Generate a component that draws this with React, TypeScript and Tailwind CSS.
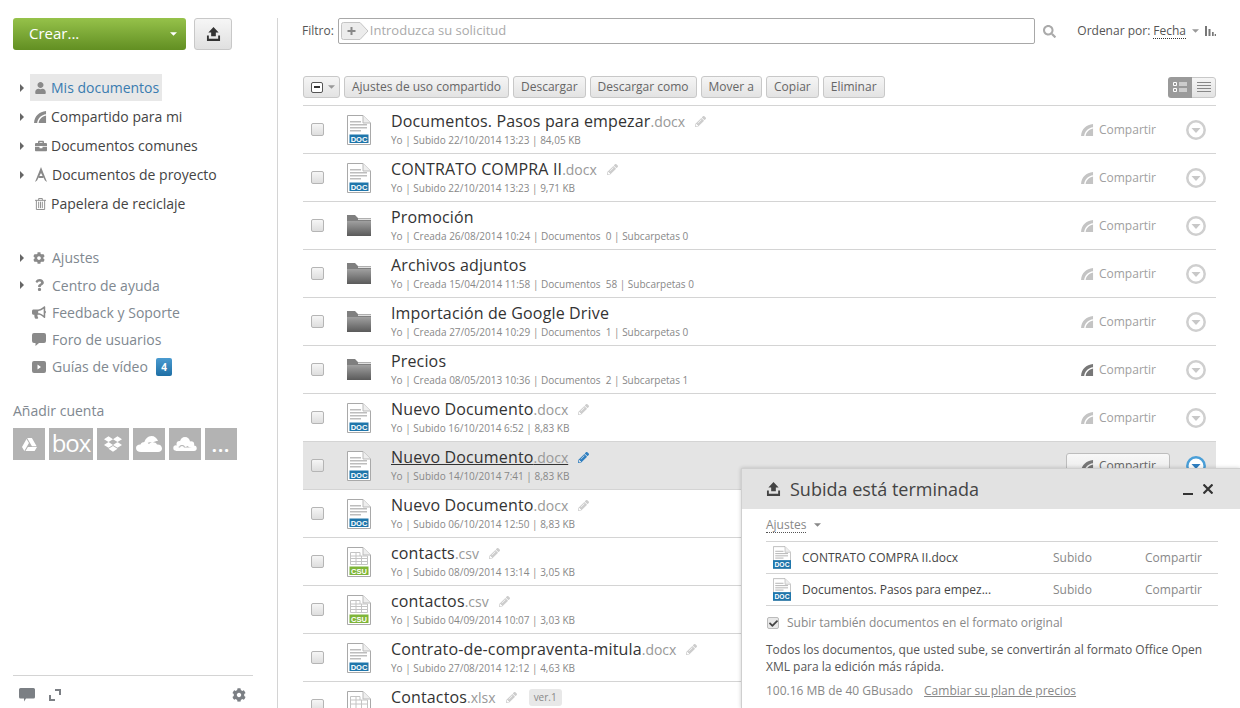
import React from 'react';
import { FaUser, FaBriefcase, FaCog, FaQuestion, FaBullhorn, FaPencilAlt, FaSearch, FaGoogleDrive, FaDropbox, FaCheck } from 'react-icons/fa';

type Kind = 'doc' | 'folder' | 'csv' | 'xlsx';

type Row = {
  name: string;
  ext?: string;
  meta: string;
  kind: Kind;
  shared?: boolean;
  hover?: boolean;
  badge?: string;
};

const rows: Row[] = [
  { name: 'Documentos. Pasos para empezar', ext: '.docx', meta: 'Yo | Subido 22/10/2014 13:23 | 84,05 KB', kind: 'doc' },
  { name: 'CONTRATO COMPRA II', ext: '.docx', meta: 'Yo | Subido 22/10/2014 13:23 | 9,71 KB', kind: 'doc' },
  { name: 'Promoción', meta: 'Yo | Creada 26/08/2014 10:24 | Documentos  0 | Subcarpetas 0', kind: 'folder' },
  { name: 'Archivos adjuntos', meta: 'Yo | Creada 15/04/2014 11:58 | Documentos  58 | Subcarpetas 0', kind: 'folder' },
  { name: 'Importación de Google Drive', meta: 'Yo | Creada 27/05/2014 10:29 | Documentos  1 | Subcarpetas 0', kind: 'folder' },
  { name: 'Precios', meta: 'Yo | Creada 08/05/2013 10:36 | Documentos  2 | Subcarpetas 1', kind: 'folder', shared: true },
  { name: 'Nuevo Documento', ext: '.docx', meta: 'Yo | Subido 16/10/2014 6:52 | 8,83 KB', kind: 'doc' },
  { name: 'Nuevo Documento', ext: '.docx', meta: 'Yo | Subido 14/10/2014 7:41 | 8,83 KB', kind: 'doc', hover: true },
  { name: 'Nuevo Documento', ext: '.docx', meta: 'Yo | Subido 06/10/2014 12:50 | 8,83 KB', kind: 'doc' },
  { name: 'contacts', ext: '.csv', meta: 'Yo | Subido 08/09/2014 13:14 | 3,05 KB', kind: 'csv' },
  { name: 'contactos', ext: '.csv', meta: 'Yo | Subido 04/09/2014 10:07 | 3,03 KB', kind: 'csv' },
  { name: 'Contrato-de-compraventa-mitula', ext: '.docx', meta: 'Yo | Subido 27/08/2014 12:12 | 4,63 KB', kind: 'doc' },
  { name: 'Contactos', ext: '.xlsx', meta: '', kind: 'xlsx', badge: 'ver.1' },
];

const UploadIcon = ({ className }: { className?: string }) => (
  <svg viewBox="0 0 16 15" className={className} fill="currentColor">
    <path d="M8 0 L13.5 6 H10.5 V10 H5.5 V6 H2.5 Z" />
    <path d="M1 9 H3 V12.5 H13 V9 H15 V15 H1 Z" />
  </svg>
);

const ShareIcon = ({ className }: { className?: string }) => (
  <svg viewBox="0 0 14 13" className={className} fill="currentColor">
    <path d="M0 13 C0.5 5.5 5.5 0.8 13 0 V3.4 C8 4 4 7.5 3.4 13 Z" />
    <path d="M5 13 C5.4 9.2 8.6 5.8 13 5 V13 Z" />
  </svg>
);

const Caret = ({ className }: { className?: string }) => (
  <svg viewBox="0 0 8 4" className={className} fill="currentColor">
    <path d="M0 0 H8 L4 4 Z" />
  </svg>
);

const Arrow = () => (
  <svg viewBox="0 0 4 8" className="w-[4px] h-[8px] text-[#666]" fill="currentColor">
    <path d="M0 0 L4 4 L0 8 Z" />
  </svg>
);

const PageIcon = ({ kind, small }: { kind: Kind; small?: boolean }) => {
  const label = kind === 'csv' ? 'CSU' : kind === 'xlsx' ? '' : 'DOC';
  const color = kind === 'csv' ? '#7fb539' : '#1f76ab';
  const grid = kind === 'csv' || kind === 'xlsx';
  return (
    <svg viewBox="0 0 24 30" className={small ? 'w-[18px] h-[23px]' : 'w-[24px] h-[30px]'}>
      <path d="M0.5 0.5 H16 L23.5 8 V29.5 H0.5 Z" fill="#fff" stroke="#a9a9a9" />
      <path d="M16 0.5 V8 H23.5" fill="#eee" stroke="#bbb" />
      {grid ? (
        <g fill="none" stroke="#c4c4c4">
          <path d={kind === 'xlsx' ? 'M3.5 5.5 H13 V9 H20.5 V26.5 H3.5 Z' : 'M3.5 5.5 H13 V9 H20.5 V17.5 H3.5 Z'} />
          <path d={kind === 'xlsx' ? 'M3.5 9 H13 M3.5 13 H20.5 M3.5 18 H20.5 M3.5 22 H20.5 M9 5.5 V26.5 M14.5 9 V26.5' : 'M3.5 9 H13 M3.5 11.5 H20.5 M3.5 14.5 H20.5 M9 5.5 V17.5 M14.5 9 V17.5'} />
        </g>
      ) : (
        <g fill="#bdbdbd">
          <rect x="3" y="6" width="11" height="1.5" />
          <rect x="3" y="9" width="17" height="1.5" />
          <rect x="3" y="12" width="17" height="1.5" />
          <rect x="3" y="15" width="11" height="1.5" />
        </g>
      )}
      {label && (
        <>
          <rect x={small ? 0 : 2.5} y={small ? 18.5 : 19.5} width={small ? 24 : 19} height={small ? 11.5 : 8.5} fill={color} />
          <text x="12" y={small ? 27.5 : 26.5} textAnchor="middle" fontSize={small ? 9 : 7.5} fontWeight="700" fill="#fff" fontFamily="'Liberation Sans', sans-serif">
            {label}
          </text>
        </>
      )}
    </svg>
  );
};

const FolderIcon = () => (
  <svg viewBox="0 0 24 21" className="w-[24px] h-[21px]">
    <defs>
      <linearGradient id="fold" x1="0" y1="0" x2="0" y2="1">
        <stop offset="0" stopColor="#a0a0a0" />
        <stop offset="1" stopColor="#5a5a5a" />
      </linearGradient>
    </defs>
    <path d="M0 0 H8 L11 3 H24 V21 H0 Z" fill="#7f7f7f" />
    <rect x="11" y="3.5" width="13" height="1.5" fill="#e0e0e0" />
    <path d="M0 6 H24 V21 H0 Z" fill="url(#fold)" />
  </svg>
);

const Checkbox = () => (
  <span className="block w-[13px] h-[13px] rounded-[2px] border border-[#b5b5b5] bg-gradient-to-b from-[#f6f6f6] to-[#dedede]" />
);

const FileRow = ({ row }: { row: Row }) => (
  <div className={`flex items-center h-[48px] shrink-0 border-b border-[#d4d4d4] ${row.hover ? 'bg-[#e4e4e4]' : ''}`}>
    <div className="w-[44px] pl-[8px] flex items-center">
      <Checkbox />
    </div>
    <div className="w-[44px] flex justify-start">
      {row.kind === 'folder' ? <FolderIcon /> : <PageIcon kind={row.kind} />}
    </div>
    <div className="flex-1 min-w-0">
      <div className="flex items-center h-[22px] mt-[-2px]">
        <span className={`text-[16px] leading-[22px] font-medium tracking-[0.15px] text-[#333] ${row.hover ? 'underline' : ''}`}>
          {row.name}
          {row.ext && <span className="font-normal text-[14px] tracking-normal text-[#999]">{row.ext}</span>}
        </span>
        {row.kind !== 'folder' && (
          <FaPencilAlt className={`ml-[10px] w-[11px] h-[11px] ${row.hover ? 'text-[#2f7fc1]' : 'text-[#cdcdcd]'}`} />
        )}
        {row.badge && (
          <span className="ml-[12px] px-[5px] h-[17px] leading-[17px] rounded-[3px] bg-[#e8e8e8] text-[10px] text-[#888]">{row.badge}</span>
        )}
      </div>
      <div className="min-h-[14px] text-[10px] leading-[14px] text-[#888] mt-[1px] whitespace-pre">{row.meta}</div>
    </div>
    {row.hover ? (
      <div className="flex items-center w-[104px] h-[26px] mt-[1px] pl-[14px] gap-[5px] rounded-[3px] border border-[#bdbdbd] bg-gradient-to-b from-[#f8f8f8] to-[#e6e6e6] text-[12px] text-[#666] mr-[16px]">
        <ShareIcon className="w-[13px] h-[12px] text-[#777]" />
        Compartir
      </div>
    ) : (
      <div className="flex items-center gap-[5px] text-[12px] text-[#a0a0a0] mr-[30px]">
        <ShareIcon className={`w-[13px] h-[12px] ${row.shared ? 'text-[#777]' : 'text-[#c4c4c4]'}`} />
        Compartir
      </div>
    )}
    <div className="mr-[10px]">
      <svg viewBox="0 0 20 20" className="w-[20px] h-[20px]">
        <circle cx="10" cy="10" r="8.7" fill="#fff" stroke={row.hover ? '#4a9fd8' : '#cfcfcf'} strokeWidth="2.5" />
        <path d="M5.5 8 H14.5 L10 13 Z" fill={row.hover ? '#2f7fc1' : '#c8c8c8'} />
      </svg>
    </div>
  </div>
);

const NavItem = ({ icon, label, arrow, active, muted, shift, h }: { icon: React.ReactNode; label: string; arrow?: boolean; active?: boolean; muted?: boolean; shift?: boolean; h: string }) => (
  <div className={`flex items-center ${h}`}>
    <div className="w-[17px] pl-[7px] flex items-center">{arrow && <Arrow />}</div>
    <div className={`flex items-center h-[27px] pl-[3px] pr-[3px] ${active ? 'bg-[#e8e8e8]' : ''}`}>
      <span className={`flex justify-center items-center text-[#8a8a8a] ${muted ? 'w-[14px] -ml-[1px] mr-[5px]' : 'w-[15px] mr-[3px]'}`}>{icon}</span>
      <span className={`text-[14px] ${muted || shift ? 'ml-[1px]' : ''} ${active ? 'text-[#3a7cb0]' : muted ? 'text-[#808890]' : 'text-[#444]'}`}>{label}</span>
    </div>
  </div>
);

const Tile = ({ wide, children }: { wide?: boolean; children: React.ReactNode }) => (
  <div className={`${wide ? 'w-[44px]' : 'w-[32px]'} h-[32px] bg-[#b3b3b3] text-white flex items-center justify-center`}>{children}</div>
);

const OneDriveIcon = () => (
  <svg viewBox="0 0 26 16" className="w-[26px] h-[16px]" fill="currentColor">
    <path d="M8 8 C8.5 3 12 0 15.5 0 C18.5 0 21 2 22 5 C20 5 18 5.5 16.5 7 C15 6 13 6 11.5 7 C10.5 7.3 9 7.5 8 8 Z" />
    <path d="M5 16 C2 16 0 14.5 0 12 C0 9.8 2 8.3 4.5 8.5 C6 5 11 5.5 13 8 C15 5.5 20 6 21 8.5 C24 8.3 26 10 26 12.5 C26 14.5 24.5 16 22 16 Z" />
  </svg>
);

const OwnCloudIcon = () => (
  <svg viewBox="0 0 24 14" className="w-[24px] h-[14px]" fill="currentColor">
    <circle cx="12" cy="5" r="5" />
    <circle cx="6.5" cy="7" r="3" />
    <circle cx="18" cy="7.5" r="3.2" />
    <circle cx="3" cy="11" r="2.7" />
    <circle cx="21" cy="11.3" r="2.7" />
    <circle cx="9" cy="11" r="3" fill="#b3b3b3" />
    <circle cx="9" cy="11" r="2" />
    <rect x="3" y="10.5" width="18" height="3.5" />
  </svg>
);

const Sidebar = () => (
  <aside className="w-[278px] shrink-0 h-full pt-[18px] pl-[13px] flex flex-col relative">
    <div className="absolute right-0 top-[18px] bottom-0 w-px bg-[#d4d4d4]" />
    <div className="flex gap-[8px]">
      <div className="w-[173px] h-[32px] rounded-[3px] bg-gradient-to-b from-[#96c24a] to-[#628f22] flex items-center pl-[16px] pr-[9px] justify-between text-white text-[15px] leading-[30px]">
        <span className="mt-[-2px]">Crear...</span>
        <Caret className="w-[7px] h-[4px]" />
      </div>
      <div className="w-[38px] h-[32px] rounded-[3px] border border-[#c8c8c8] bg-gradient-to-b from-[#f6f6f6] to-[#e0e0e0] flex items-center justify-center text-[#333]">
        <UploadIcon className="w-[15px] h-[14px]" />
      </div>
    </div>
    <div className="mt-[23px] flex flex-col">
      <NavItem h="h-[29px]" active arrow label="Mis documentos" icon={<FaUser className="w-[11px] h-[12px]" />} />
      <NavItem h="h-[29px]" arrow label="Compartido para mi" icon={<ShareIcon className="w-[13px] h-[12px]" />} />
      <NavItem h="h-[29px]" arrow label="Documentos comunes" icon={<FaBriefcase className="w-[12px] h-[12px]" />} />
      <NavItem
        h="h-[29px]"
        arrow
        shift
        label="Documentos de proyecto"
        icon={
          <svg viewBox="0 0 12 15" className="w-[12px] h-[15px]" fill="currentColor">
            <path d="M6 0 L7 2.5 L12 15 L10 13.5 L6 6 L2 13.5 L0 15 L5 2.5 Z" />
            <path d="M4 9 H8 L8.6 11 H3.4 Z" />
          </svg>
        }
      />
      <NavItem h="h-[29px]" label="Papelera de reciclaje" icon={
        <svg viewBox="0 0 12 13" className="w-[11px] h-[12px]" fill="none" stroke="currentColor">
          <path d="M0 2.5 H12 M4 2.5 V0.5 H8 V2.5" />
          <path d="M1.5 2.5 V12.5 H10.5 V2.5 M4 4 V11 M6 4 V11 M8 4 V11" />
        </svg>
      } />
    </div>
    <div className="mt-[26px] flex flex-col">
      <NavItem h="h-[27px]" muted arrow label="Ajustes" icon={<FaCog className="w-[12px] h-[12px]" />} />
      <NavItem h="h-[28px]" muted arrow label="Centro de ayuda" icon={<FaQuestion className="w-[11px] h-[12px]" />} />
      <NavItem h="h-[27px]" muted label="Feedback y Soporte" icon={<FaBullhorn className="w-[14px] h-[13px]" />} />
      <NavItem h="h-[27px]" muted label="Foro de usuarios" icon={
        <svg viewBox="0 0 14 13" className="w-[14px] h-[13px]" fill="currentColor">
          <path d="M2 0 H12 Q14 0 14 2 V8 Q14 10 12 10 H7 L3.5 13 V10 H2 Q0 10 0 8 V2 Q0 0 2 0 Z" />
        </svg>
      } />
      <div className="relative">
        <NavItem h="h-[27px]" muted label="Guías de vídeo" icon={
          <svg viewBox="0 0 14 12" className="w-[14px] h-[12px]" fill="currentColor">
            <path fillRule="evenodd" d="M2 0 H12 Q14 0 14 2 V10 Q14 12 12 12 H2 Q0 12 0 10 V2 Q0 0 2 0 Z M5.5 3.5 V8.5 L9 6 Z" />
          </svg>
        } />
        <span className="absolute left-[143px] top-[5px] w-[16px] h-[18px] rounded-[2px] bg-gradient-to-b from-[#4a9bd0] to-[#1d6fa5] text-white text-[10px] font-bold flex items-center justify-center">4</span>
      </div>
    </div>
    <div className="mt-[21px] text-[14px] leading-[20px] text-[#808890]">Añadir cuenta</div>
    <div className="mt-[7px] flex gap-[4px]">
      <Tile><FaGoogleDrive className="w-[17px] h-[15px]" /></Tile>
      <Tile wide><span className="text-[24px] leading-none font-normal tracking-[-1px] mt-[-3px]">box</span></Tile>
      <Tile><FaDropbox className="w-[18px] h-[18px]" /></Tile>
      <Tile><OneDriveIcon /></Tile>
      <Tile><OwnCloudIcon /></Tile>
      <Tile><span className="text-[18px] leading-none font-bold tracking-[1px] mt-[2px]">...</span></Tile>
    </div>
    <div className="mt-auto w-[240px] h-[33px] pt-[6px] border-t border-[#d4d4d4] flex items-center pl-[6px] text-[#7b7f84]">
      <svg viewBox="0 0 16 14" className="w-[16px] h-[14px]" fill="currentColor">
        <path d="M1.5 0 H14.5 Q16 0 16 1.5 V9 Q16 10.5 14.5 10.5 H7 L5 13.5 V10.5 H1.5 Q0 10.5 0 9 V1.5 Q0 0 1.5 0 Z" />
      </svg>
      <svg viewBox="0 0 12 12" className="ml-[14px] w-[12px] h-[12px]" fill="none" stroke="currentColor" strokeWidth="2">
        <path d="M6 1 H11 V6 M1 6 V11 H6" />
      </svg>
      <FaCog className="ml-auto mr-[7px] w-[14px] h-[14px]" />
    </div>
  </aside>
);

const ToolButton = ({ children }: { children: React.ReactNode }) => (
  <div className="h-[22px] px-[7px] rounded-[3px] border border-[#c8c8c8] bg-gradient-to-b from-[#f5f5f5] to-[#e3e3e3] text-[12px] leading-[20px] text-[#666] whitespace-nowrap">{children}</div>
);

const TopBar = () => (
  <div className="flex items-center h-[26px] mt-[18px] pl-[24px] pr-[24px]">
    <span className="text-[12px] text-[#555]">Filtro:</span>
    <div className="ml-[4px] flex-1 h-[26px] rounded-[2px] border border-[#a8a8a8] flex items-center pl-[2px]">
      <svg viewBox="0 0 28 18" className="w-[28px] h-[18px]">
        <path d="M2.5 0.5 H19 L27 9 L19 17.5 H2.5 Q0.5 17.5 0.5 15.5 V2.5 Q0.5 0.5 2.5 0.5 Z" fill="#ececec" stroke="#c4c4c4" />
        <path d="M9.5 5 H11.5 V8 H14.5 V10 H11.5 V13 H9.5 V10 H6.5 V8 H9.5 Z" fill="#888" />
      </svg>
      <span className="ml-[1px] text-[13px] text-[#aaa]">Introduzca su solicitud</span>
    </div>
    <FaSearch className="ml-[8px] w-[13px] h-[13px] text-[#aaa]" />
    <span className="ml-[21px] text-[12px] text-[#555] whitespace-nowrap">Ordenar por:</span>
    <span className="ml-[3px] text-[12px] leading-[15px] text-[#555] border-b border-dotted border-[#333]">Fecha</span>
    <Caret className="ml-[6px] w-[7px] h-[4px] text-[#999]" />
    <svg viewBox="0 0 11 10" className="ml-[6px] w-[11px] h-[10px] text-[#777]" fill="currentColor">
      <path d="M0 0 H2 V10 H0 Z M3.5 3 H5.5 V10 H3.5 Z M7 6 H8.7 V10 H7 Z M9.7 8 H11 V10 H9.7 Z" />
    </svg>
  </div>
);

const Toolbar = () => (
  <div className="flex items-center mt-[32px] ml-[25px] mr-[24px] gap-[4px] h-[22px]">
    <div className="w-[37px] h-[22px] rounded-[3px] border border-[#c8c8c8] bg-gradient-to-b from-[#f5f5f5] to-[#e3e3e3] flex items-center pl-[7px] gap-[5px]">
      <span className="w-[12px] h-[11px] rounded-[2px] border border-[#555] bg-white flex items-center justify-center">
        <span className="w-[6px] h-[2px] bg-[#333]" />
      </span>
      <Caret className="w-[7px] h-[4px] text-[#999]" />
    </div>
    <ToolButton>Ajustes de uso compartido</ToolButton>
    <ToolButton>Descargar</ToolButton>
    <ToolButton>Descargar como</ToolButton>
    <ToolButton>Mover a</ToolButton>
    <ToolButton>Copiar</ToolButton>
    <ToolButton>Eliminar</ToolButton>
    <div className="ml-auto flex h-[21px] w-[48px] rounded-[3px] overflow-hidden">
      <div className="w-[24px] bg-[#9a9a9a] flex items-center justify-center">
        <svg viewBox="0 0 14 10" className="w-[14px] h-[10px]" fill="none" stroke="#fff">
          <path d="M0.5 0.5 H3.5 V3.5 H0.5 Z M0.5 6.5 H3.5 V9.5 H0.5 Z M6 1 H14 M6 3 H14 M6 7 H14 M6 9 H14" />
        </svg>
      </div>
      <div className="w-[24px] border border-l-0 border-[#c8c8c8] rounded-r-[3px] bg-gradient-to-b from-[#f5f5f5] to-[#e3e3e3] flex items-center justify-center">
        <svg viewBox="0 0 14 10" className="w-[14px] h-[10px]" fill="none" stroke="#888">
          <path d="M0 0.5 H14 M0 3.5 H14 M0 6.5 H14 M0 9.5 H14" />
        </svg>
      </div>
    </div>
  </div>
);

const UploadRow = ({ name }: { name: string }) => (
  <div className="flex items-center h-[32px] border-b border-[#d4d4d4] text-[12px]">
    <div className="w-[36px] pl-[7px] flex items-center"><PageIcon kind="doc" small /></div>
    <span className="w-[251px] text-[#444] whitespace-nowrap">{name}</span>
    <span className="w-[92px] text-[#888]">Subido</span>
    <span className="text-[#888]">Compartir</span>
  </div>
);

const UploadPanel = () => (
  <div className="absolute left-[741px] top-[468px] w-[499px] h-[240px] bg-white border-l border-t border-[#cfcfcf] shadow-[0_0_4px_rgba(0,0,0,0.2)]">
    <div className="h-[40px] bg-[#e2e2e2] flex items-center pl-[24px] pr-[27px] text-[#444]">
      <UploadIcon className="w-[15px] h-[14px] text-[#444]" />
      <span className="ml-[9px] text-[18px]">Subida está terminada</span>
      <span className="ml-auto w-[10px] h-[2px] bg-[#333] mt-[10px]" />
      <svg viewBox="0 0 10 10" className="ml-[10px] w-[10px] h-[10px]" stroke="#333" strokeWidth="2.2">
        <path d="M0.5 0.5 L9.5 9.5 M9.5 0.5 L0.5 9.5" />
      </svg>
    </div>
    <div className="pl-[24px] pr-[22px]">
      <div className="flex items-center h-[33px] border-b border-[#d4d4d4] text-[12px] text-[#888]">
        <span className="border-b border-dotted border-[#555] leading-[15px]">Ajustes</span>
        <Caret className="ml-[8px] w-[7px] h-[4px] text-[#888]" />
      </div>
      <UploadRow name="CONTRATO COMPRA II.docx" />
      <UploadRow name="Documentos. Pasos para empez..." />
      <div className="flex items-center h-[34px] text-[12px] text-[#888]">
        <span className="ml-[1px] w-[12px] h-[12px] rounded-[2px] border border-[#bbb] bg-[#e8e8e8] flex items-center justify-center">
          <FaCheck className="w-[9px] h-[9px] text-[#444]" />
        </span>
        <span className="ml-[8px]">Subir también documentos en el formato original</span>
      </div>
      <p className="mt-[1px] text-[12px] leading-[17px] text-[#555]">
        Todos los documentos, que usted sube, se convertirán al formato Office Open XML para la edición más rápida.
      </p>
      <div className="mt-[7px] flex text-[12px] text-[#888]">
        <span>100.16 MB de 40 GBusado</span>
        <span className="ml-[11px] underline">Cambiar su plan de precios</span>
      </div>
    </div>
  </div>
);

const App = () => (
  <div className="relative w-[1240px] h-[708px] overflow-hidden bg-white flex font-['Open_Sans',sans-serif]">
    <Sidebar />
    <main className="flex-1 min-w-0 h-full flex flex-col">
      <TopBar />
      <Toolbar />
      <div className="mt-[7px] ml-[25px] mr-[24px] border-t border-[#d4d4d4] flex flex-col">
        {rows.map((row, i) => (
          <FileRow key={i} row={row} />
        ))}
      </div>
    </main>
    <UploadPanel />
  </div>
);

export default App;
